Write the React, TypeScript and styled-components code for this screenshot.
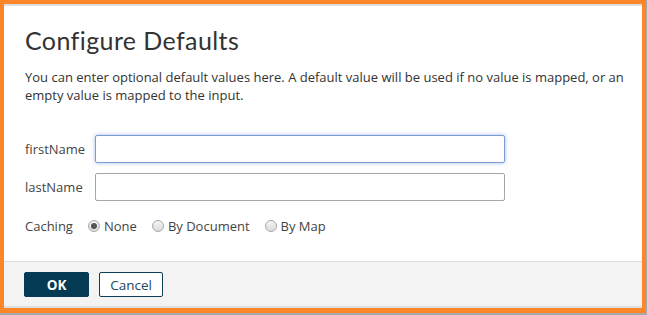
import React, { useState } from 'react'
import styled, { createGlobalStyle } from 'styled-components'

const GlobalStyle = createGlobalStyle`
  html, body {
    margin: 0;
    padding: 0;
    background: #a8a8a8;
  }
  * {
    box-sizing: border-box;
  }
`

const cachingOptions = ['None', 'By Document', 'By Map']

const App = () => {
  const [caching, setCaching] = useState('None')

  return (
    <>
      <GlobalStyle />
      <Frame>
        <Dialog>
          <Body>
            <Title>Configure Defaults</Title>
            <Description>
              You can enter optional default values here. A default value will be used if no value is mapped, or an
              empty value is mapped to the input.
            </Description>
            <Form>
              <FieldRow>
                <Label>firstName</Label>
                <TextInput focused />
              </FieldRow>
              <FieldRow>
                <Label>lastName</Label>
                <TextInput />
              </FieldRow>
              <RadioRow>
                <Label narrow>Caching</Label>
                {cachingOptions.map(option => (
                  <RadioOption key={option} onClick={() => setCaching(option)}>
                    <RadioDot checked={caching === option} />
                    {option}
                  </RadioOption>
                ))}
              </RadioRow>
            </Form>
          </Body>
          <Footer>
            <PrimaryButton>OK</PrimaryButton>
            <SecondaryButton>Cancel</SecondaryButton>
          </Footer>
        </Dialog>
      </Frame>
    </>
  )
}

export default App

const Frame = styled.div`
  width: 646px;
  height: 313px;
  padding: 4px 4px 5px 4px;
  background: #fd862c;
`

const Dialog = styled.div`
  display: flex;
  flex-direction: column;
  height: 100%;
  background: #fff;
  border-top: 2px solid #dedede;
  border-bottom: 2px solid #dedede;
`

const Body = styled.div`
  flex: 1;
  padding: 19px 0 0 21px;
  font-family: 'Open Sans', sans-serif;
  color: #333;
`

const Title = styled.h1`
  margin: 0;
  font-family: Lato, sans-serif;
  font-weight: 400;
  font-size: 25px;
  line-height: 30px;
  letter-spacing: 0.4px;
  color: #333;
`

const Description = styled.p`
  margin: 13px 0 0 0;
  font-size: 13px;
  line-height: 18px;
`

const Form = styled.div`
  display: flex;
  flex-direction: column;
  gap: 10px;
  margin-top: 31px;
`

const FieldRow = styled.div`
  display: flex;
  align-items: center;
  height: 28px;
`

const Label = styled.span<{ narrow?: boolean }>`
  width: ${({ narrow }) => (narrow ? '63px' : '70px')};
  font-size: 13px;
  color: #444;
`

const TextInput = styled.input<{ focused?: boolean }>`
  width: 410px;
  height: 28px;
  border-radius: 2px;
  font-family: 'Open Sans', sans-serif;
  font-size: 13px;
  outline: none;
  border: 1px solid ${({ focused }) => (focused ? '#7a9cd6' : '#a6a6a6')};
  box-shadow: ${({ focused }) => (focused ? '0 0 4px rgba(110, 150, 220, 0.6)' : 'none')};
`

const RadioRow = styled.div`
  display: flex;
  align-items: center;
  height: 30px;
  font-size: 13px;
  color: #444;
`

const RadioOption = styled.label`
  display: flex;
  align-items: center;
  margin-right: 15px;
  cursor: pointer;
`

const RadioDot = styled.span<{ checked: boolean }>`
  display: inline-flex;
  align-items: center;
  justify-content: center;
  width: 12px;
  height: 12px;
  margin-right: 4px;
  border-radius: 50%;
  border: 1px solid #a9a9a9;
  background: linear-gradient(#f4f4f4, #dcdcdc);

  &::after {
    content: '';
    display: ${({ checked }) => (checked ? 'block' : 'none')};
    width: 6px;
    height: 6px;
    border-radius: 50%;
    background: #555;
  }
`

const Footer = styled.div`
  display: flex;
  gap: 10px;
  height: 45px;
  padding: 10px 20px 0 20px;
  background: #f3f3f3;
  border-top: 1px solid #dcdcdc;
`

const BaseButton = styled.button`
  height: 25px;
  border-radius: 2px;
  font-family: 'Open Sans', sans-serif;
  font-size: 13.5px;
  cursor: pointer;
`

const PrimaryButton = styled(BaseButton)`
  width: 65px;
  border: 1px solid #053a54;
  background: #053a54;
  color: #fff;
  font-weight: 700;
`

const SecondaryButton = styled(BaseButton)`
  width: 64px;
  border: 1px solid #0e3d56;
  background: #fff;
  color: #1e4760;
`
